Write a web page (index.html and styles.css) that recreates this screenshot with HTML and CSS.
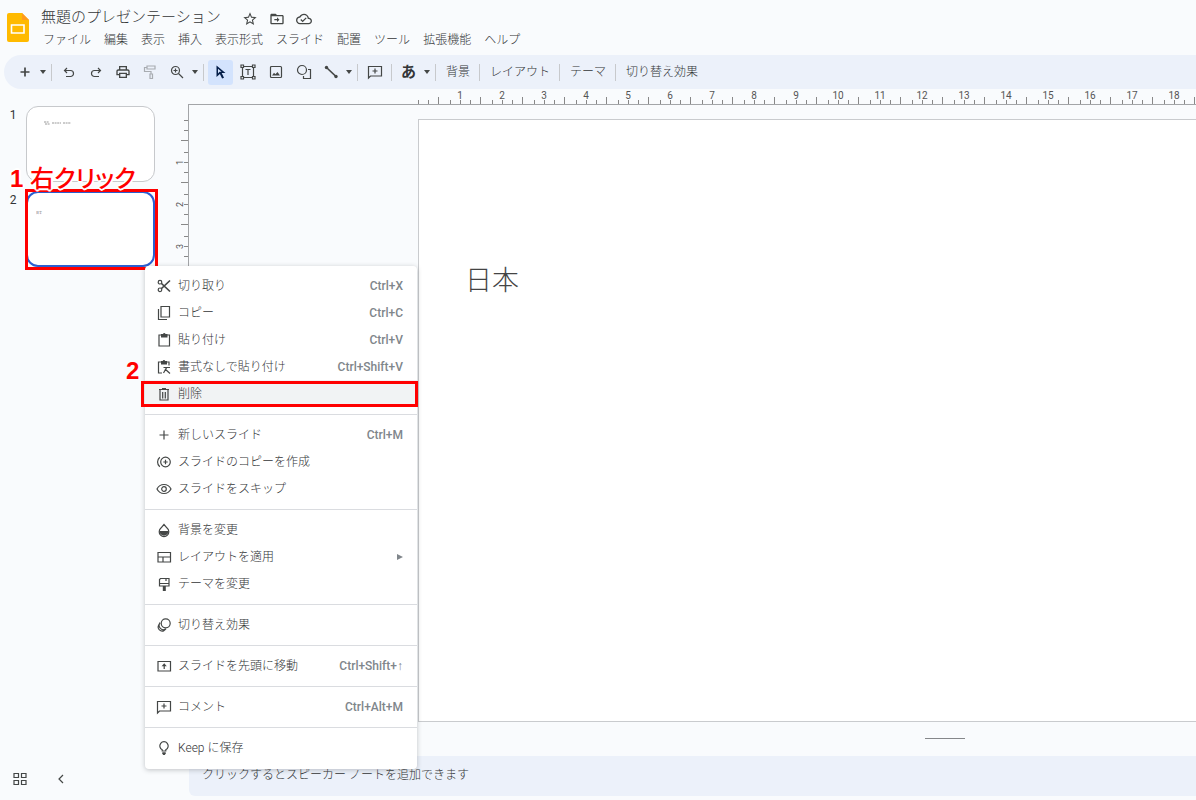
FILE: index.html
```html
<!DOCTYPE html>
<html lang="ja">
<head>
<meta charset="utf-8">
<title>無題のプレゼンテーション</title>
<link rel="stylesheet" href="styles.css">
</head>
<body>
<header class="header">
  <svg class="logo" viewBox="0 0 22 29"><path fill="#ffba00" d="M2 0h13l7 7v20a2 2 0 0 1-2 2H2a2 2 0 0 1-2-2V2a2 2 0 0 1 2-2z"/><path fill="#ff9a1f" d="M15 0l7 7h-7z"/><path fill="none" stroke="#fff" stroke-width="1.600" d="M4.500 12h12.500v8H4.500z"/></svg>
  <div class="heading">
    <div class="title-row">
      <h1 class="title">無題のプレゼンテーション</h1>
      <button class="title-btn" aria-label="スター"><svg class="ic16" viewBox="0 0 24 24"><path d="M22 9.240l-7.190-.62L12 2 9.190 8.630 2 9.240l5.460 4.730L5.820 21 12 17.270 18.180 21l-1.630-7.030L22 9.240zM12 15.400l-3.760 2.270 1-4.280-3.320-2.880 4.380-.38L12 6.100l1.710 4.040 4.380.38-3.320 2.880 1 4.280L12 15.400z"/></svg></button>
      <button class="title-btn" aria-label="移動"><svg class="ic16" viewBox="0 0 24 24"><path d="M20 6h-8l-2-2H4c-1.100 0-2 .9-2 2v12c0 1.100.9 2 2 2h16c1.100 0 2-.9 2-2V8c0-1.100-.9-2-2-2zm0 12H4V8h16v10zM12 9.500v2.500H8v2h4v2.500l3.700-3.500z"/></svg></button>
      <button class="title-btn" aria-label="保存済み"><svg class="ic16" viewBox="0 0 24 24"><path d="M19.350 10.040C18.670 6.590 15.640 4 12 4 9.110 4 6.610 5.640 5.350 8.040 2.340 8.360 0 10.910 0 14c0 3.310 2.690 6 6 6h13c2.760 0 5-2.240 5-5 0-2.640-2.050-4.780-4.650-4.960zM19 18H6c-2.210 0-4-1.790-4-4 0-2.050 1.530-3.760 3.560-3.970l1.070-.11.5-.95C8.080 7.140 9.940 6 12 6c2.620 0 4.880 1.860 5.390 4.430l.3 1.500 1.530.11c1.560.1 2.780 1.410 2.780 2.960 0 1.650-1.350 3-3 3zm-9-3.820l-2.090-2.090L6.500 13.500 10 17l6.010-6.010-1.410-1.410z"/></svg></button>
    </div>
    <nav class="menubar">
      <button>ファイル</button><button>編集</button><button>表示</button><button>挿入</button><button>表示形式</button><button>スライド</button><button>配置</button><button>ツール</button><button>拡張機能</button><button>ヘルプ</button>
    </nav>
  </div>
</header>

<div class="toolbar" role="toolbar">
  <button class="tool" aria-label="新しいスライド"><svg class="ic16" viewBox="0 0 16 16"><path class="ln2" d="M8 3.500v9M3.500 8h9"/></svg></button>
  <button class="caret" aria-label="開く"></button>
  <span class="sep"></span>
  <button class="tool" aria-label="元に戻す"><svg class="ic16" viewBox="0 0 16 16"><path class="ln" d="M6 4L3.500 6.500 6 9M3.500 6.500h6a3 3 0 0 1 0 6H5"/></svg></button>
  <button class="tool" aria-label="やり直し"><svg class="ic16" viewBox="0 0 16 16"><path class="ln" d="M10 4l2.500 2.500L10 9M12.500 6.500h-6a3 3 0 0 0 0 6H11"/></svg></button>
  <button class="tool" aria-label="印刷"><svg class="ic16" viewBox="0 0 24 24"><path d="M19 8h-1V3H6v5H5c-1.660 0-3 1.340-3 3v6h4v4h12v-4h4v-6c0-1.660-1.340-3-3-3zM8 5h8v3H8V5zm8 14H8v-4h8v4zm2-4v-2H6v2H4v-4c0-.55.45-1 1-1h14c.55 0 1 .45 1 1v4h-2z"/></svg></button>
  <button class="tool dim" aria-label="書式を貼り付け"><svg class="ic16" viewBox="0 0 16 16"><path class="ln" d="M5 2h8v3H5zM5 3.500H2.500v4H9V10M8 10h2.500v4.500H8z"/></svg></button>
  <button class="tool" aria-label="ズーム"><svg class="ic16" viewBox="0 0 16 16"><circle class="ln" cx="6.500" cy="6.500" r="4"/><path class="ln" d="M9.500 9.500L14 14M6.500 4.500v4M4.500 6.500h4"/></svg></button>
  <button class="caret" aria-label="ズームを選択"></button>
  <span class="sep"></span>
  <button class="tool selected" aria-label="選択"><svg class="ic16" viewBox="0 0 16 16"><path fill="#041e49" fill-rule="evenodd" d="M3.500 1.500l9 7.500H8.700l2.300 4.700-1.900.9-2.200-4.700-3.400 3.200zM5 4.800v4.600l1.500-1.600h2.100z"/></svg></button>
  <button class="tool wide" aria-label="テキストボックス"><svg class="ic16" viewBox="0 0 16 16"><path class="ln" d="M2.500 4v8M13.500 4v8M4 2.500h8M4 13.500h8M5.500 5.500h5M8 5.500V11"/><path class="ln" d="M1 1h2.500v2.500H1zM12.500 1H15v2.500h-2.500zM1 12.500h2.500V15H1zM12.500 12.500H15V15h-2.500z"/></svg></button>
  <button class="tool wide" aria-label="画像"><svg class="ic16" viewBox="0 0 16 16"><rect class="ln" x="2.500" y="2.500" width="11" height="11" rx="1"/><path d="M4 11.500l2-2.800 1.400 1.500L9.500 8l2.500 3.500z"/></svg></button>
  <button class="tool" aria-label="図形"><svg class="ic16" viewBox="0 0 16 16"><circle class="ln" cx="6" cy="6" r="4.500"/><path class="ln" d="M12 5.500h2.500v9h-7V12"/></svg></button>
  <button class="tool" aria-label="線"><svg class="ic16" viewBox="0 0 16 16"><path class="ln2" d="M3.500 3.500l9.500 9"/><circle cx="3.500" cy="3.500" r="1.700"/><circle cx="13" cy="12.500" r="1.700"/></svg></button>
  <button class="caret" aria-label="線を選択"></button>
  <span class="sep"></span>
  <button class="tool" aria-label="コメントを追加"><svg class="ic16" viewBox="0 0 16 16"><path class="ln" d="M1.500 14V2.500h13v9.500H3.500zM8 4.500v5M5.500 7h5"/></svg></button>
  <span class="sep"></span>
  <button class="tool kana">あ</button>
  <button class="caret" aria-label="入力ツールを選択"></button>
  <span class="sep"></span>
  <button class="text-tool">背景</button>
  <span class="sep"></span>
  <button class="text-tool">レイアウト</button>
  <span class="sep"></span>
  <button class="text-tool">テーマ</button>
  <span class="sep"></span>
  <button class="text-tool">切り替え効果</button>
</div>

<main class="workspace">
  <aside class="filmstrip">
    <ol class="slides">
      <li class="slide-row"><span class="num">1</span><div class="thumb"><svg class="thumb-lines" viewBox="0 0 28 4"><path fill="none" stroke="#999" stroke-width="1" stroke-dasharray="2 .6" d="M0 1h5M1 3h5M8 2h9M19 2h8"/></svg></div></li>
      <li class="slide-row"><span class="num">2</span><div class="thumb current"><span class="thumb-text">日本</span></div>
        <span class="mark mark-slide"></span><span class="note note-one">1 <span class="note-kana">右クリック</span></span></li>
    </ol>
    <div class="film-footer">
      <button class="foot-btn" aria-label="グリッド表示"><svg class="ic16" viewBox="0 0 16 16"><path class="ln" d="M2 2.500h4.500V6.500H2zM9.500 2.500H14V6.500H9.500zM2 9.500h4.500v4H2zM9.500 9.500H14v4H9.500z"/></svg></button>
      <button class="foot-btn" aria-label="フィルムストリップを非表示"><svg class="ic16" viewBox="0 0 16 16"><path class="ln" d="M10 4L6 8l4 4"/></svg></button>
    </div>
  </aside>
  <div class="vruler"><div class="vticks"><span>1</span><span>2</span><span>3</span></div></div>
  <section class="editor">
    <div class="hruler"><div class="hticks"><span>1</span><span>2</span><span>3</span><span>4</span><span>5</span><span>6</span><span>7</span><span>8</span><span>9</span><span>10</span><span>11</span><span>12</span><span>13</span><span>14</span><span>15</span><span>16</span><span>17</span><span>18</span></div></div>
    <div class="canvas"><div class="slide"><p class="slide-title">日本</p></div></div>
    <div class="splitter"><span class="handle"></span></div>
    <textarea class="notes" rows="1" aria-label="スピーカー ノート" placeholder="クリックするとスピーカー ノートを追加できます"></textarea>
  </section>
</main>

<div class="context-menu" role="menu">
  <button class="item" role="menuitem"><svg class="ic16" viewBox="0 0 16 16"><circle class="ln" cx="4" cy="4.200" r="1.800"/><circle class="ln" cx="4" cy="11.800" r="1.800"/><path class="ln2" d="M5.500 5.500L14 13.500M5.500 10.500L14 2.500"/></svg><span>切り取り</span><kbd>Ctrl+X</kbd></button>
  <button class="item" role="menuitem"><svg class="ic16" viewBox="0 0 16 16"><path class="ln" d="M5 1.500h8.500v10.500H5zM2.500 4v10.500H11"/></svg><span>コピー</span><kbd>Ctrl+C</kbd></button>
  <button class="item" role="menuitem"><svg class="ic16" viewBox="0 0 16 16"><path class="ln" d="M3 3h10.500v11H3z"/><path d="M5 2h2a1.300 1.300 0 0 1 2.500 0h2v3.500H5z"/></svg><span>貼り付け</span><kbd>Ctrl+V</kbd></button>
  <button class="item" role="menuitem"><svg class="ic16" viewBox="0 0 16 16"><path class="ln" d="M6 14H2.500V3H13v3.500M7.500 8.500H14M10.700 8.500L7.500 14M9 10l5 4.500"/><path d="M5 2h1.700a1.300 1.300 0 0 1 2.500 0H11v3.500H5z"/></svg><span>書式なしで貼り付け</span><kbd>Ctrl+Shift+V</kbd></button>
  <button class="item hovered" role="menuitem"><svg class="ic16" viewBox="0 0 16 16"><path class="ln" d="M3 3.500h10M6 2.500h4M4 4v10h8V4M6.700 6v6.500M9.300 6v6.500"/></svg><span>削除</span><i class="mark mark-item"></i><b class="note note-two">2</b></button>
  <hr>
  <button class="item" role="menuitem"><svg class="ic16" viewBox="0 0 16 16"><path class="ln" d="M8 3.500v9M3.500 8h9"/></svg><span>新しいスライド</span><kbd>Ctrl+M</kbd></button>
  <button class="item" role="menuitem"><svg class="ic16" viewBox="0 0 16 16"><circle class="ln" cx="9.500" cy="8" r="4.800"/><path class="ln" d="M9.500 5.800v4.400M7.300 8h4.400M3.800 3.200a6.300 6.300 0 0 0 0 9.600"/></svg><span>スライドのコピーを作成</span></button>
  <button class="item" role="menuitem"><svg class="ic16" viewBox="0 0 16 16"><path class="ln" d="M1 8c3-6 11-6 14 0-3 6-11 6-14 0z"/><circle class="ln" cx="8" cy="8" r="2.300"/></svg><span>スライドをスキップ</span></button>
  <hr>
  <button class="item" role="menuitem"><svg class="ic16" viewBox="0 0 16 16"><path class="ln" d="M8 2.500L4.700 6.300a4.800 4.800 0 1 0 6.600 0z"/><path d="M3.300 9h9.400a4.700 4.700 0 0 1-9.400 0z"/></svg><span>背景を変更</span></button>
  <button class="item" role="menuitem"><svg class="ic16" viewBox="0 0 16 16"><path class="ln" d="M2 3.500h12.500v9.500H2zM2 8h12.500M7 8v5"/></svg><span>レイアウトを適用</span><em class="submenu"></em></button>
  <button class="item" role="menuitem"><svg class="ic16" viewBox="0 0 16 16"><path class="ln" d="M4.500 2.500h8.500v7.500H3.500V3.500zM3.500 7.500H13M10 2.500v2.500"/><path d="M6.800 10h3v5h-3z"/></svg><span>テーマを変更</span></button>
  <hr>
  <button class="item" role="menuitem"><svg class="ic16" viewBox="0 0 16 16"><circle class="ln" cx="9.700" cy="6.300" r="4.500"/><path class="ln" d="M4 5.800a4.300 4.300 0 0 0 6 6M2.600 8.300a4 4 0 0 0 5.400 5.300M4 5.800L2.600 8.300M10 11.800L8 13.600"/></svg><span>切り替え効果</span></button>
  <hr>
  <button class="item" role="menuitem"><svg class="ic16" viewBox="0 0 16 16"><path class="ln" d="M2 3.500h12.500v9.500H2zM8.200 7v4"/><path d="M8.200 5.200l2.600 3H5.600z"/></svg><span>スライドを先頭に移動</span><kbd>Ctrl+Shift+<span class="arrow">↑</span></kbd></button>
  <hr>
  <button class="item" role="menuitem"><svg class="ic16" viewBox="0 0 16 16"><path class="ln" d="M1.500 14V2.500h13v9.500H3.500zM8 4.500v5M5.500 7h5"/></svg><span>コメント</span><kbd>Ctrl+Alt+M</kbd></button>
  <hr>
  <button class="item" role="menuitem"><svg class="ic16" viewBox="0 0 16 16"><path class="ln" d="M6.200 11V9.700a4.200 4.200 0 1 1 3.600 0V11zM6.500 13h3"/><path d="M6.300 12.500h3.400v1L8.800 15H7.200l-.9-1.500z"/></svg><span>Keep に保存</span></button>
</div>
</body>
</html>
```
FILE: styles.css
```css
* { box-sizing: border-box; }
body {
  margin: 0;
  min-height: 100vh;
  display: flex;
  flex-direction: column;
  position: relative;
  overflow-x: hidden;
  background: #f9fbfd;
  color: #333537;
  font: 300 12px/18px Roboto, "Noto Sans CJK JP", sans-serif;
}
button {
  border: 0;
  padding: 0;
  background: none;
  color: inherit;
  font: inherit;
  white-space: nowrap;
}
svg { display: block; fill: #444746; flex: none; }
.ic16 { width: 16px; height: 16px; }
.ln { fill: none; stroke: #444746; stroke-width: 1.200; }
.ln2 { fill: none; stroke: #444746; stroke-width: 1.700; }

.header { display: flex; gap: 12px; padding: 4px 7px 6px; height: 55px; }
.logo { width: 22px; height: 29px; margin-top: 9px; }
.title-row { display: flex; align-items: center; height: 25px; }
.title { margin: 0 16px 0 0; font-size: 15px; line-height: 24px; font-weight: 300; }
.title-btn { width: 27px; height: 24px; display: grid; place-items: center; padding-top: 4px; }
.menubar { display: flex; gap: 13px; padding-left: 2px; margin-top: 2px; }

.toolbar {
  display: flex;
  align-items: center;
  height: 34px;
  margin-left: 4px;
  padding-left: 7px;
  border-radius: 17px 0 0 17px;
  background: #ecf1fa;
}
.tool { width: 27px; height: 25px; display: grid; place-items: center; border-radius: 3px; }
.wide { width: 28px; }
.selected { width: 25px; margin: 0 1px; background: #d3e3fd; }
.dim { opacity: .4; }
.kana { font-weight: 700; font-size: 15px; }
.caret { width: 10px; height: 24px; display: grid; place-items: center; }
.caret::before { content: ""; border: 3px solid transparent; border-top: 4px solid #444746; border-bottom: 0; }
.sep { width: 1px; height: 17px; margin: 0 3px; background: #c7c9cc; }
.text-tool { padding: 0 6px 0 7px; }

.workspace { flex: 1; display: flex; }
.filmstrip { width: 172px; display: flex; flex-direction: column; justify-content: space-between; }
.slides { list-style: none; margin: 0; padding: 17px 0 0; display: grid; gap: 9px; }
.slide-row { display: flex; position: relative; }
.num { width: 26px; text-align: center; font-weight: 400; }
.thumb { width: 129px; height: 76px; border: 1px solid #c7c9cc; border-radius: 12px; background: #fff; padding: 14px 17px; }
.thumb-lines { width: 28px; height: 4px; }
.current { border: 2px solid #2b5fd0; padding: 17px 8px; }
.thumb-text { display: block; font-size: 3px; line-height: 6px; }
.mark { position: absolute; border: 3px solid #f00; pointer-events: none; }
.mark-slide { left: 25px; top: -2px; width: 133px; height: 81px; }
.note { position: absolute; color: #f00; font: 700 24px/30px "Liberation Sans", "Noto Sans CJK JP", sans-serif; white-space: nowrap; }
.note-one {
  left: 10px;
  top: -29px;
  text-shadow: 2px 0 #fff, -2px 0 #fff, 0 2px #fff, 0 -2px #fff, 1px 1px #fff, -1px 1px #fff, 1px -1px #fff, -1px -1px #fff;
}
.note-kana { font-family: "Noto Sans CJK JP", sans-serif; font-weight: 500; font-feature-settings: "palt"; }
.film-footer { display: flex; gap: 25px; padding: 0 12px 13px; }
.foot-btn { width: 16px; height: 16px; }

.vruler { width: 17px; margin: 15px 0 44px; padding-top: 16px; border-right: 1px solid #a3a5a8; }
.vticks {
  height: 100%;
  padding: 21px 0 0 3px;
  color: #555;
  font: 400 9px/11px Roboto, sans-serif;
  background:
    linear-gradient(#888 1px, transparent 1px) right 0 top 0 / 4px 42px repeat-y,
    linear-gradient(#888 1px, transparent 1px) right 0 top 10px / 4px 42px repeat-y,
    linear-gradient(#888 1px, transparent 1px) right 0 top 20px / 7px 42px repeat-y,
    linear-gradient(#888 1px, transparent 1px) right 0 top 32px / 4px 42px repeat-y;
}
.vticks span { display: block; width: 11px; height: 42px; text-align: center; writing-mode: vertical-rl; transform: rotate(180deg); }

.editor { flex: 1; min-width: 0; display: flex; flex-direction: column; }
.hruler { height: 16px; padding-left: 229px; border-bottom: 1px solid #a3a5a8; overflow: hidden; }
.hticks {
  display: flex;
  height: 15px;
  padding-left: 21px;
  color: #555;
  font: 400 10px/14px Roboto, sans-serif;
  background:
    linear-gradient(90deg, #888 1px, transparent 1px) left 0 bottom 0 / 42px 4px repeat-x,
    linear-gradient(90deg, #888 1px, transparent 1px) left 10px bottom 0 / 42px 4px repeat-x,
    linear-gradient(90deg, #888 1px, transparent 1px) left 20px bottom 0 / 42px 7px repeat-x,
    linear-gradient(90deg, #888 1px, transparent 1px) left 32px bottom 0 / 42px 4px repeat-x;
}
.hticks span { flex: none; width: 42px; text-align: center; }
.canvas { flex: 1; display: flex; padding: 14px 0 0 229px; }
.slide { flex: 1; background: #fff; border: 1px solid #c9cbce; border-right: 0; padding: 142px 46px; }
.slide-title { margin: 0; font-size: 27px; line-height: 38px; color: #444; }
.splitter { height: 34px; padding: 16px 0 0 736px; }
.handle { display: block; width: 40px; height: 1px; background: #85878a; }
.notes {
  display: block;
  width: 100%;
  height: 40px;
  margin-bottom: 4px;
  padding: 10px 13px;
  border: 0;
  border-radius: 6px 0 0 6px;
  background: #ecf1fa;
  resize: none;
  overflow: hidden;
  font: inherit;
}
.notes::placeholder { color: #333537; opacity: 1; }

.context-menu {
  position: absolute;
  left: 145px;
  top: 266px;
  width: 272px;
  padding: 6px 0 8px;
  border-radius: 4px;
  background: #fff;
  box-shadow: 0 1px 5px rgba(60, 64, 67, .3);
}
.item { position: relative; display: flex; align-items: center; gap: 6px; width: 100%; height: 27px; padding: 0 14px 0 11px; text-align: left; }
.hovered { background: #f1f3f4; }
.item kbd { margin-left: auto; color: #80868b; font: 500 12px/18px Roboto, sans-serif; }
.arrow { font-family: "Liberation Sans", sans-serif; font-weight: 400; }
.submenu { margin-left: auto; border: 3px solid transparent; border-left: 6px solid #80868b; border-right: 0; }
.context-menu hr { height: 1px; margin: 7px 0 6px; border: 0; background: #dadce0; }
.mark-item { left: -4px; top: 1px; width: 277px; height: 26px; }
.note-two { left: -19px; top: -24px; }
.note-two, .mark-item { z-index: 1; }
```
